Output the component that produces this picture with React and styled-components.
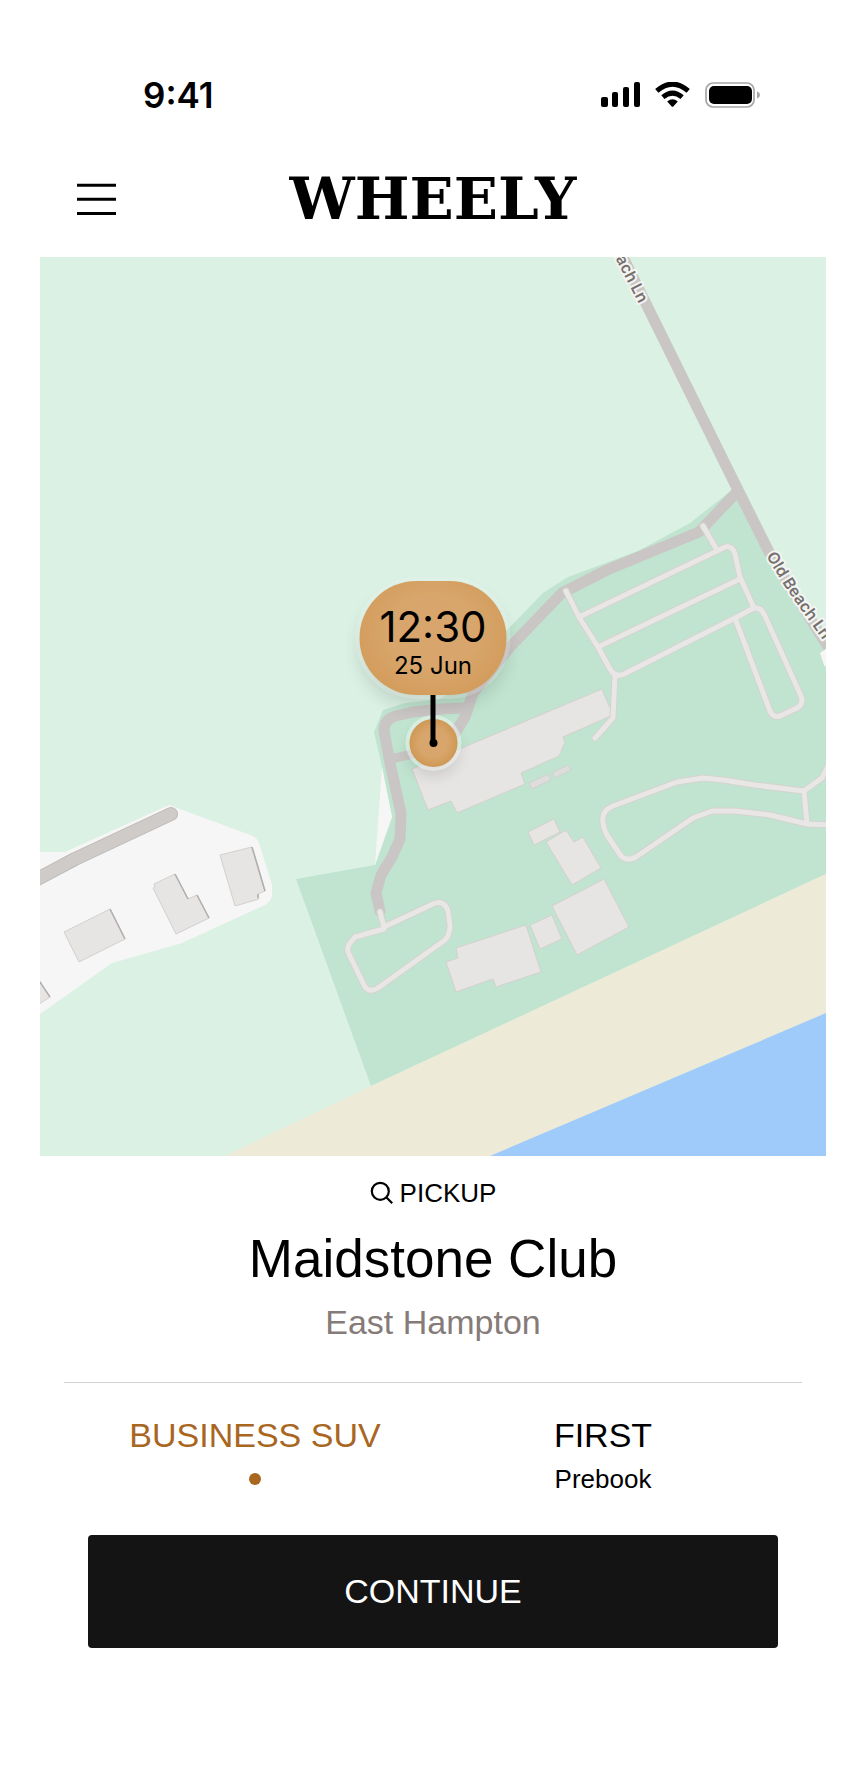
import React, { useState } from "react";
import styled, { createGlobalStyle } from "styled-components";


const rides = [
    { id: "business-suv", name: "BUSINESS SUV" },
    { id: "first", name: "FIRST", note: "Prebook" },
];

// building outlines
const buildings = [
    "602,689 613,715 563,737 565,742 559,756 521,773 525,784 457,813 451,801 428,810 412,769",
    "528,832 554,819 560,832 534,845",
    "546,842 566,830 574,842 583,837 601,868 572,885",
    "552,906 604,879 629,927 577,955",
    "530,925 552,915 562,939 540,949",
    "456,948 526,925 541,972 496,987 493,979 456,992 446,962 458,958",
    "64,932 110,909 125,939 79,962",
    "154,884 175,874 188,899 197,895 209,918 176,934 153,888 155,887",
    "220,855 252,847 265,891 258,894 259,899 235,906",
    "36,976 50,997 36,1006",
];

const sheds = [
    "529,783 548,774 551,780 532,789",
    "552,773 568,765 571,770 555,778",
];

const shadows = [
    "M110,909 L125,939",
    "M175,874 L188,899 M197,895 L209,918",
    "M252,847 L265,891 M258,894 L258,898",
    "M36,976 L50,997",
];

const driveways = [
    "M736,493 L699,532 L607,570 L562,593 L510,647 L473,693 L465,717 L455,733",
    "M465,708 L440,709 L413,712 L396,716 Q384,719 384,731 L390,763 L401,813 L400,839 L392,857 L381,875 L376,893 L380,911",
];

const footpaths =
    "M703,526 L717,550 " +
    "M579,617 L717,551 L723,548 Q732,544 735,554 L740,577 L754,608 " +
    "M598,647 L740,579 " +
    "M566,591 L579,617 L598,647 L610,669 Q615,678 624,674 L735,618 L752,609 Q760,605 765,616 L801,696 Q804,704 797,708 L780,716 Q773,718 770,711 L735,618 " +
    "M615,676 L613,718 L595,738 " +
    "M830,762 L822,778 L804,791 L755,785 L723,780 L703,778 L677,782 L613,806 Q601,811 603,822 Q604,830 607,835 L621,856 Q627,862 636,857 L693,818 L712,811 L735,811 L770,815 L807,824 L830,825 " +
    "M804,791 L807,824 " +
    "M380,912 L384,927 L433,904 Q444,899 448,911 L450,925 Q450,935 445,940 L378,988 Q370,993 365,987 L348,952 Q347,947 350,943 L355,937 L384,929";

const Map = () => (
    <MapSvg viewBox="40 257 786 899" role="img" aria-label="Map around Maidstone Club">
        <rect x="40" y="257" width="786" height="899" fill="#dbf1e4" />
        <polygon
            fill="#c0e4cf"
            points="732,490 690,523 638,551 568,577 543,593 507,630 470,680 440,699 405,703 383,710 374,732 382,767 392,817 375,865 296,879 371,1086 826,874 826,640 790,585 768,552 738,490"
        />
        <polygon fill="#f6f6f6" points="382,767 392,817 375,865" />
        <polygon fill="#eeead8" points="225,1156 371,1086 826,874 826,1156" />
        <polygon fill="#9ecbfa" points="490,1156 826,1013 826,1156" />
        <path
            fill="#f6f6f6"
            d="M40,852 H65 L169,805 L253,836 Q257,838 259,843 L272,885 V896 Q271,901 265,905 L182,943 L112,963 L40,1014 Z"
        />

        <g fill="none" strokeLinecap="round" strokeLinejoin="round">
            <path d="M30,883 L75,859 L171,814" stroke="#bfbbb8" strokeWidth="14" />
            <path d="M30,883 L75,859 L171,814" stroke="#cfcbc8" strokeWidth="12" />
        </g>

        <g fill="none" stroke="#cac6c5" strokeWidth="11" strokeLinejoin="round">
            <path d="M618,247 L738,490 L769,552 L794,593 L834,656" />
            {driveways.map((d) => <path key={d} d={d} strokeLinecap="round" />)}
            <path d="M390,759 L418,753" strokeWidth="9" />
        </g>
        <polygon fill="#f6f6f6" points="820,653 830,646 830,672 824,665" />

        <g fill="#e7e5e4" stroke="#d3d0ce" strokeWidth="1">
            {buildings.map((points) => <polygon key={points} points={points} />)}
        </g>
        <g fill="#dedddd" stroke="#d3d0ce" strokeWidth="1">
            {sheds.map((points) => <polygon key={points} points={points} />)}
        </g>
        <g fill="none" stroke="#b0aeac" strokeWidth="1.5">
            {shadows.map((d) => <path key={d} d={d} />)}
        </g>

        <g fill="none" strokeLinecap="round" strokeLinejoin="round">
            <path d={footpaths} stroke="#d5d3d0" strokeWidth="7" />
            <path d={footpaths} stroke="#e8e7e6" strokeWidth="5" />
        </g>

        <defs>
            <path id="lane-north" d="M588,205 L639,304" />
            <path id="lane-south" d="M766,556 L787,590 L840,664" />
        </defs>
        <StreetName textAnchor="end">
            <textPath href="#lane-north" startOffset="100%">Old Beach Ln</textPath>
        </StreetName>
        <StreetName>
            <textPath href="#lane-south">Old Beach Ln</textPath>
        </StreetName>
    </MapSvg>
);

const SignalIcon = () => (
    <svg width="39" height="26" viewBox="0 0 39 26" aria-hidden="true">
        <rect x="0" y="15" width="7" height="10" rx="2" />
        <rect x="11" y="10" width="6" height="15" rx="2" />
        <rect x="22" y="5" width="6" height="20" rx="2" />
        <rect x="33" y="0" width="6" height="25" rx="2" />
    </svg>
);

const WifiIcon = () => (
    <svg width="35" height="26" viewBox="0 0 35 26" aria-hidden="true">
        <path d="M1.8,8.8 Q17.5,-4.6 33.2,8.8" fill="none" stroke="#000" strokeWidth="5" />
        <path d="M7.9,15.1 Q17.5,7 27.1,15.1" fill="none" stroke="#000" strokeWidth="5" />
        <path d="M12.2,19.4 Q17.5,15.2 22.8,19.4 L18.3,24.5 Q17.5,25.2 16.7,24.5 Z" />
    </svg>
);

const BatteryIcon = () => (
    <svg width="56" height="26" viewBox="0 0 56 26" aria-hidden="true">
        <rect x="1" y="1" width="48" height="24" rx="7" fill="none" stroke="#a6a6a6" strokeWidth="1.7" />
        <rect x="4" y="4" width="43" height="18" rx="5" />
        <path d="M52,9.2 Q55,10.4 55,13 Q55,15.6 52,16.8 Z" fill="#a6a6a6" />
    </svg>
);

const MenuIcon = () => (
    <svg width="39" height="33" viewBox="0 0 39 33" aria-hidden="true">
        <path d="M0,2.3 H39 M0,16.3 H39 M0,30.4 H39" stroke="#000" strokeWidth="3" />
    </svg>
);

const SearchIcon = () => (
    <svg width="24" height="24" viewBox="0 0 24 24" fill="none" stroke="#000" strokeWidth="2.2" aria-hidden="true">
        <circle cx="10.3" cy="10.3" r="8.5" />
        <path d="M16.3,16.3 L22.2,22.2" />
    </svg>
);

const App = () => {
    const [selected, setSelected] = useState("business-suv");

    return (
        <Screen>
            <GlobalStyle />
            <StatusBar>
                <time>9:41</time>
                <StatusIcons>
                    <SignalIcon />
                    <WifiIcon />
                    <BatteryIcon />
                </StatusIcons>
            </StatusBar>
            <Header>
                <MenuButton type="button" aria-label="Menu"><MenuIcon /></MenuButton>
                <Logo>WHEELY</Logo>
            </Header>

            <MapArea>
                <Map />
                <Pin>
                    <PinBubble>
                        <div className="time">12:30</div>
                        <div className="date">25 Jun</div>
                    </PinBubble>
                    <PinStem />
                    <PinBase />
                </Pin>
            </MapArea>

            <Place>
                <PickupButton type="button"><SearchIcon />PICKUP</PickupButton>
                <h1>Maidstone Club</h1>
                <p>East Hampton</p>
            </Place>

            <RideList>
                {rides.map(({ id, name, note }) => (
                    <RideButton
                        key={id}
                        type="button"
                        aria-pressed={selected === id}
                        $active={selected === id}
                        onClick={() => setSelected(id)}
                    >
                        <span className="name">{name}</span>
                        <span className="note">{selected === id ? <Dot /> : note}</span>
                    </RideButton>
                ))}
            </RideList>
            <ContinueButton type="button">CONTINUE</ContinueButton>
        </Screen>
    )
}


export default App;

const GlobalStyle = createGlobalStyle`
    body {
        margin: 0;
        background: #fff;
    }
`;

const Screen = styled.main`
    padding: 73px 40px 130px;
    box-sizing: border-box;
    color: #000;
    font-family: "Liberation Sans", Arial, sans-serif;
`;

const Button = styled.button`
    padding: 0;
    border: 0;
    background: none;
    color: inherit;
    font-family: inherit;
    cursor: pointer;
`;

const StatusBar = styled.div`
    display: flex;
    align-items: center;
    justify-content: space-between;
    height: 44px;
    padding: 0 65px 0 103px;
    font-family: Inter, sans-serif;
    font-size: 35px;
    font-weight: 600;
`;

const StatusIcons = styled.div`
    display: flex;
    align-items: center;
    gap: 15px;
`;

const Header = styled.header`
    display: grid;
    grid-template-columns: 1fr auto 1fr;
    align-items: center;
    height: 116px;
    margin-top: 24px;
    padding: 0 37px;
`;

const MenuButton = styled(Button)`
    display: flex;
    justify-self: start;
`;

const Logo = styled.div`
    font-family: "DejaVu Serif", serif;
    font-size: 58px;
    font-weight: 700;
    line-height: 60px;
`;

const MapArea = styled.section`
    position: relative;
    overflow: hidden;
`;

const MapSvg = styled.svg`
    display: block;
    width: 100%;
    height: auto;
`;

const StreetName = styled.text`
    font-family: Inter, sans-serif;
    font-size: 16px;
    font-weight: 600;
    fill: #75706e;
    stroke: #f4f4f2;
    stroke-width: 4px;
    stroke-linejoin: round;
    paint-order: stroke;
`;

const Pin = styled.div`
    position: absolute;
    top: 36%;
    left: 50%;
    display: flex;
    flex-direction: column;
    align-items: center;
    transform: translateX(-50%);
    font-family: Inter, sans-serif;
`;

const PinBubble = styled.div`
    display: flex;
    flex-direction: column;
    align-items: center;
    justify-content: center;
    width: 147px;
    height: 114px;
    padding-top: 8px;
    box-sizing: border-box;
    border-radius: 57px;
    background: radial-gradient(ellipse at 50% 45%, #d8a66c 40%, #cf9651 100%);
    box-shadow: 0 0 0 4px rgba(255, 255, 255, 0.2), 0 10px 18px rgba(0, 0, 0, 0.14);
    .time {
        font-size: 42px;
        line-height: 48px;
    }
    .date {
        font-size: 24px;
        line-height: 30px;
    }
`;

const PinStem = styled.div`
    z-index: 1;
    width: 5px;
    height: 48px;
    background: #000;
`;

const PinBase = styled.div`
    display: grid;
    place-items: center;
    width: 48px;
    height: 48px;
    margin-top: -24px;
    border-radius: 50%;
    background: radial-gradient(circle, #d8a66c 40%, #cf9651 75%);
    box-shadow: 0 0 0 4px rgba(244, 250, 246, 0.5), 0 8px 16px rgba(0, 0, 0, 0.14);
    &::after {
        content: "";
        width: 8px;
        height: 8px;
        border-radius: 50%;
        background: #000;
    }
`;

const Place = styled.section`
    display: flex;
    flex-direction: column;
    align-items: center;
    margin: 0 24px;
    padding: 21px 0 40px;
    border-bottom: 1px solid #d2d2d2;
    h1 {
        margin: 20px 0 13px;
        font-size: 53px;
        font-weight: 400;
        line-height: 60px;
    }
    p {
        margin: 0;
        font-size: 34px;
        line-height: 40px;
        color: #857b78;
    }
`;

const PickupButton = styled(Button)`
    display: flex;
    align-items: center;
    gap: 6px;
    font-size: 26px;
    line-height: 32px;
`;

const RideList = styled.div`
    display: grid;
    grid-template-columns: 1fr 1fr;
    padding: 32px 49px 0 41px;
`;

const RideButton = styled(Button)`
    display: flex;
    flex-direction: column;
    align-items: center;
    gap: 8px;
    color: ${({ $active }) => ($active ? "#a9661f" : "#000")};
    .name {
        font-size: 34px;
        line-height: 40px;
    }
    .note {
        display: flex;
        align-items: center;
        height: 32px;
        font-size: 26px;
    }
`;

const Dot = styled.i`
    width: 12px;
    height: 12px;
    border-radius: 50%;
    background: #a9661f;
`;

const ContinueButton = styled(Button)`
    display: block;
    width: calc(100% - 96px);
    height: 113px;
    margin: 40px auto 0;
    border-radius: 4px;
    background: #141414;
    color: #fff;
    font-size: 34px;
`;
